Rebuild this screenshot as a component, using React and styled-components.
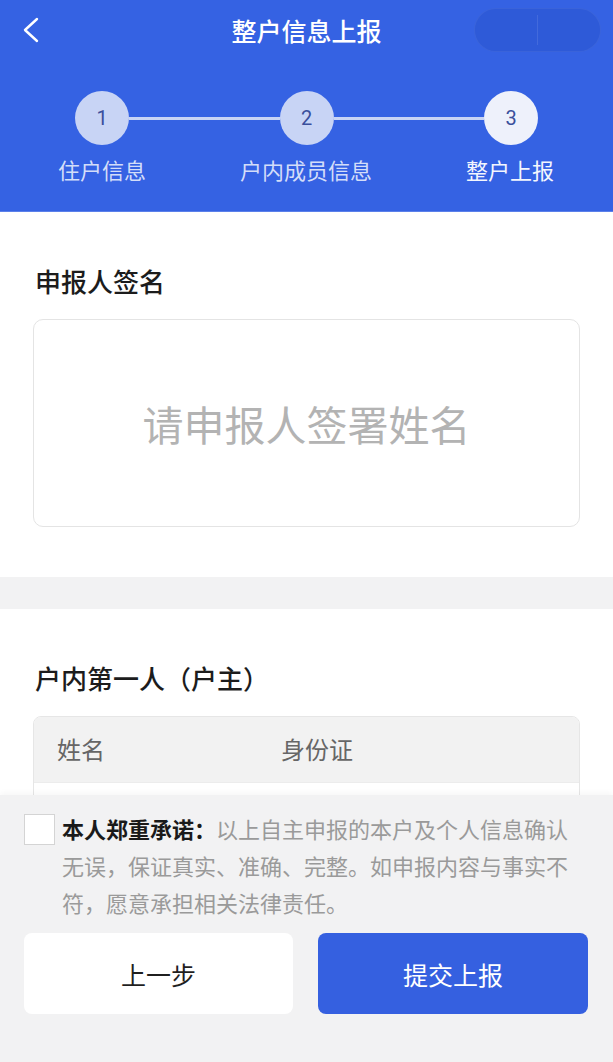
import React from 'react';
import styled, { createGlobalStyle } from 'styled-components';

const GlobalStyle = createGlobalStyle`
  html, body {
    margin: 0;
    padding: 0;
    background: #ffffff;
    font-family: "Noto Sans CJK SC", "Noto Sans", sans-serif;
  }
  * { box-sizing: border-box; }
`;

const Page = styled.div`
  height: 100vh;
  display: flex;
  flex-direction: column;
  overflow: hidden;
`;

const Content = styled.div`
  flex: 1;
  overflow: hidden;
  background: #f2f2f3;
`;

const Header = styled.header`
  height: 212px;
  background: #3562e3;
  color: #fff;
  border-bottom: 1px solid #5b80ea;
`;

const NavBar = styled.div`
  height: 60px;
  display: grid;
  grid-template-columns: 140px 1fr 140px;
  align-items: center;
`;

const BackButton = styled.div`
  padding-left: 22px;
  display: flex;
  align-items: center;
  height: 100%;
`;

const Title = styled.h1`
  margin: 0;
  text-align: center;
  font-size: 25px;
  font-weight: 500;
  line-height: 34px;
`;

const CapsuleWrap = styled.div`
  display: flex;
  justify-content: flex-end;
  padding-right: 12px;
`;

const Capsule = styled.div`
  width: 127px;
  height: 44px;
  border-radius: 22px;
  background: rgba(10, 40, 150, 0.14);
  border: 1px solid rgba(255, 255, 255, 0.06);
  display: flex;
  align-items: center;
  justify-content: center;
`;

const CapsuleDivider = styled.span`
  width: 1px;
  height: 30px;
  background: rgba(255, 255, 255, 0.1);
`;

const Stepper = styled.div`
  padding-top: 31px;
`;

const CircleRow = styled.div`
  display: flex;
  align-items: center;
  padding: 0 75px;
`;

const Circle = styled.div`
  width: 54px;
  height: 54px;
  border-radius: 50%;
  flex-shrink: 0;
  display: flex;
  align-items: center;
  justify-content: center;
  font-family: "Roboto", "Noto Sans", sans-serif;
  font-size: 20px;
  color: #3a4f9c;
  background: ${p => (p.$current ? '#eef1fb' : '#c8d4f5')};
`;

const Connector = styled.div`
  flex: 1;
  height: 3px;
  background: #c8d4f5;
`;

const LabelRow = styled.div`
  display: grid;
  grid-template-columns: repeat(3, 204px);
  margin-top: 9px;
`;

const StepLabel = styled.div`
  text-align: center;
  font-size: 22px;
  line-height: 30px;
  color: ${p => (p.$current ? '#f3f6fe' : '#d3ddf9')};
`;

const Section = styled.section`
  background: #fff;
  padding: 51px 33px ${p => p.$bottom}px;
  margin-bottom: ${p => p.$gap}px;
`;

const SectionTitle = styled.h2`
  margin: 0 0 20px 2px;
  font-size: 26px;
  font-weight: 500;
  line-height: 36px;
  color: #1c1c1c;
`;

const SignBox = styled.div`
  height: 208px;
  border: 1px solid #e4e4e4;
  border-radius: 10px;
  display: flex;
  align-items: center;
  justify-content: center;
  font-size: 41px;
  color: #b3b3b3;
`;

const Table = styled.div`
  border: 1px solid #e6e6e6;
  border-radius: 8px 8px 0 0;
  overflow: hidden;
`;

const TableRow = styled.div`
  height: 66px;
  display: grid;
  grid-template-columns: 224px 1fr;
  align-items: center;
  padding-left: 23px;
  padding-bottom: 2px;
  background: ${p => (p.$head ? '#f2f2f2' : '#fff')};
  border-bottom: 1px solid #ececec;
`;

const HeadCell = styled.span`
  font-size: 24px;
  color: #666;
`;

const Footer = styled.footer`
  flex-shrink: 0;
  height: 267px;
  background: #f2f2f3;
  box-shadow: 0 -2px 6px rgba(0, 0, 0, 0.04);
  padding: 15px 25px 0 24px;
`;

const Pledge = styled.div`
  display: flex;
  align-items: flex-start;
`;

const CheckBox = styled.div`
  width: 31px;
  height: 31px;
  flex-shrink: 0;
  margin-top: 4px;
  background: #fff;
  border: 1px solid #d4d4d4;
  margin-right: 7px;
`;

const PledgeText = styled.p`
  margin: 0;
  font-size: 22px;
  line-height: 37px;
  color: #9a9a9a;
  text-align: left;
`;

const PledgeLead = styled.strong`
  font-weight: 700;
  color: #1a1a1a;
`;

const ButtonRow = styled.div`
  display: grid;
  grid-template-columns: 269px 270px;
  gap: 25px;
  margin-top: 12px;
`;

const Button = styled.button`
  height: 81px;
  border: none;
  border-radius: 8px;
  font-family: inherit;
  font-size: 25px;
  background: ${p => (p.$primary ? '#3560e0' : '#ffffff')};
  color: ${p => (p.$primary ? '#ffffff' : '#1f1f1f')};
`;

const steps = ['住户信息', '户内成员信息', '整户上报'];

export default function App() {
  return (
    <Page>
      <GlobalStyle />
      <Content>
        <Header>
          <NavBar>
            <BackButton>
              <svg width="18" height="28" viewBox="0 0 18 28" fill="none">
                <polyline points="15,3 3,14 15,25" stroke="#fff" strokeWidth="2.4" strokeLinecap="round" strokeLinejoin="round" />
              </svg>
            </BackButton>
            <Title>整户信息上报</Title>
            <CapsuleWrap>
              <Capsule>
                <CapsuleDivider />
              </Capsule>
            </CapsuleWrap>
          </NavBar>
          <Stepper>
            <CircleRow>
              <Circle>1</Circle>
              <Connector />
              <Circle>2</Circle>
              <Connector />
              <Circle $current>3</Circle>
            </CircleRow>
            <LabelRow>
              {steps.map((s, i) => (
                <StepLabel key={s} $current={i === 2}>{s}</StepLabel>
              ))}
            </LabelRow>
          </Stepper>
        </Header>

        <Section $bottom={50} $gap={32}>
          <SectionTitle>申报人签名</SectionTitle>
          <SignBox>请申报人签署姓名</SignBox>
        </Section>

        <Section $bottom={40} $gap={0}>
          <SectionTitle>户内第一人（户主）</SectionTitle>
          <Table>
            <TableRow $head>
              <HeadCell>姓名</HeadCell>
              <HeadCell>身份证</HeadCell>
            </TableRow>
            <TableRow />
          </Table>
        </Section>
      </Content>

      <Footer>
        <Pledge>
          <CheckBox />
          <PledgeText>
            <PledgeLead>本人郑重承诺：</PledgeLead>以上自主申报的本户及个人信息确认无误，保证真实、准确、完整。如申报内容与事实不符，愿意承担相关法律责任。
          </PledgeText>
        </Pledge>
        <ButtonRow>
          <Button>上一步</Button>
          <Button $primary>提交上报</Button>
        </ButtonRow>
      </Footer>
    </Page>
  );
}
